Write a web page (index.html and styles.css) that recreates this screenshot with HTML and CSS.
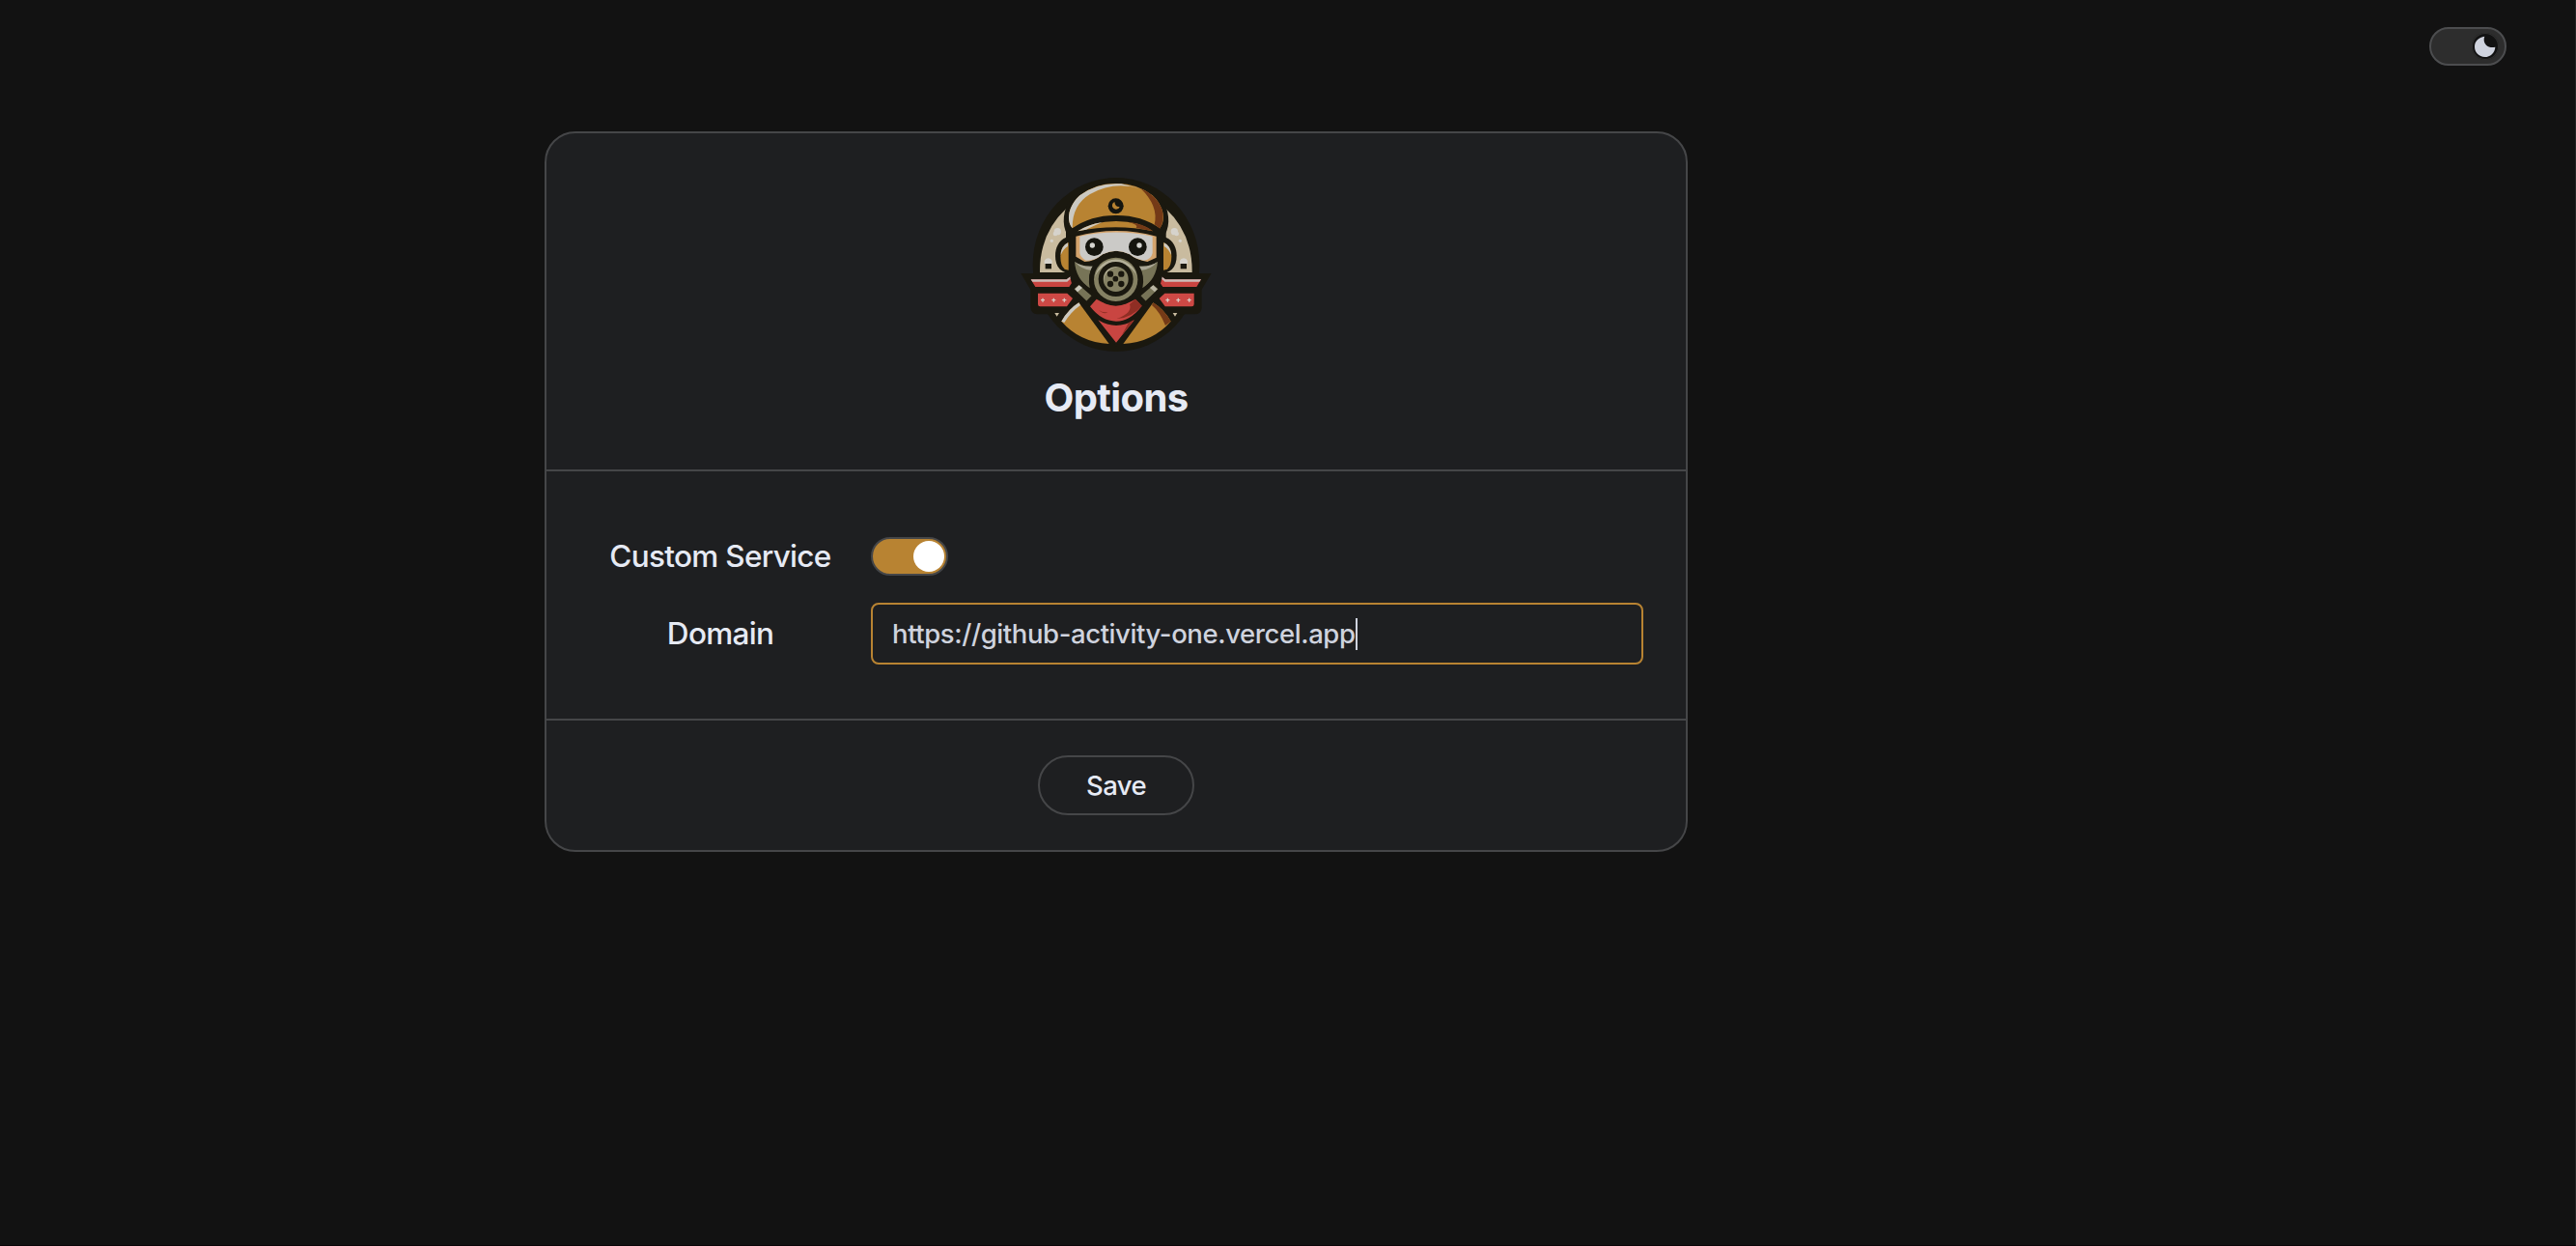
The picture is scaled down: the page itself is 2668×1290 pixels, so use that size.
FILE: index.html
```html
<!DOCTYPE html>
<html lang="en">
<head>
<meta charset="utf-8">
<title>Options</title>
<link rel="stylesheet" href="styles.css">
</head>
<body>
<div class="page">
  <nav class="topbar">
    <div class="theme-switch" role="switch" aria-checked="true">
      <span class="theme-knob">
        <svg class="moon" viewBox="0 0 84 84"><path d="M40 11C22 14 9 25 9 43C9 61 22 75 41 75C57 75 72 62 73 44C64 47 51 45 45 38C38 31 36 20 40 11Z" fill="#cfd3de"/></svg>
      </span>
    </div>
  </nav>
  <main class="card">
    <header class="card-header">
      <svg class="logo" viewBox="3 0 630 630">
        <ellipse cx="318" cy="312" rx="259" ry="270" fill="#1a180f"/>
        <path d="M22 339H614L584 389V447Q582 466 562 466H72Q54 464 52 446V390Z" fill="#1a180f"/>
        <g id="side-left">
          <path d="M81 336Q80 215 162 139V336Z" fill="#c9bb9f"/>
          <g fill="#d6d3cc"><circle cx="136" cy="209" r="11"/><circle cx="129" cy="216" r="7"/><circle cx="118" cy="238" r="5"/><path d="M95 309V300a13 13 0 0 1 24 0V309Z"/></g>
          <path d="M98 309H117V325H98Z" fill="#1a180f"/>
          <path d="M190 222C150 222 129 249 129 284C129 319 147 341 190 341Z" fill="#1a180f"/>
          <path d="M170 243Q145 253 145 286Q145 316 158 326L170 329Z" fill="#b88332"/>
          <path d="M168 244Q147 254 146 282Q154 263 168 255Z" fill="#cbc9c2"/>
          <path d="M53 358H164L182 344L190 354L172 381H67Z" fill="#c94541"/>
          <path d="M53 358H164L182 344L184 348L166 365H58Z" fill="#cbbcb8"/>
          <path d="M75 401H166L183 417L165 442H82Q75 442 75 435Z" fill="#ce4945"/>
          <path d="M90 416V428M84 422H96M124 416V428M118 422H130M157 416V428M151 422H163" stroke="#d8cbc4" stroke-width="4"/>
          <path d="M127 462H141L134 473Z" fill="#c9bb9f"/>
        </g>
        <use href="#side-left" transform="translate(635 0) scale(-1 1)"/>
        <path d="M148 488Q170 450 202 430L296 558Q205 553 148 488Z" fill="#b88332"/>
        <path d="M148 488Q170 450 202 430L207 438Q178 458 157 492Z" fill="#cbc9c2"/>
        <path d="M488 488Q466 450 433 430L340 558Q431 553 488 488Z" fill="#b88332"/>
        <path d="M488 488Q466 450 433 430L429 438Q454 458 471 501Z" fill="#743a17"/>
        <path d="M175 200H461V350Q450 410 400 442L318 566L236 442Q186 410 175 350Z" fill="#1a180f"/>
        <path d="M262 484Q318 518 375 484L318 554Z" fill="#c94541"/>
        <path d="M374 483L357 492L334 534Z" fill="#8f2e24"/>
        <path d="M257 419Q318 455 378 419L398 440Q361 488 318 488Q273 488 237 442Z" fill="#c94541"/>
        <path d="M378 419L398 440Q365 478 320 480Q370 462 360 435Z" fill="#8f2e24"/>
        <path d="M264 453Q276 462 292 459Q282 469 264 453Z" fill="#8f2e24"/>
        <path d="M193 224Q255 207 318 207Q385 207 443 224V290L415 303Q380 298 360 280Q318 259 276 280Q250 303 220 303L193 287Z" fill="#d4a46d"/>
        <path d="M205 224Q318 199 431 224V276Q427 296 405 299Q380 296 360 280Q318 259 276 280Q250 302 224 299Q207 290 205 276Z" fill="#cbcac7"/>
        <circle cx="250" cy="257" r="28" fill="#15150f"/><circle cx="244" cy="252" r="8" fill="#d5d5d1"/>
        <circle cx="385" cy="257" r="28" fill="#15150f"/><circle cx="390" cy="252" r="8" fill="#d5d5d1"/>
        <path d="M189 303Q213 320 247 317Q228 344 236 385Q193 357 189 303Z" fill="#777457"/>
        <path d="M189 303Q213 320 247 317L239 329Q212 328 189 303Z" fill="#aaa695"/>
        <path d="M447 303Q423 320 389 317Q408 344 400 385Q443 357 447 303Z" fill="#777457"/>
        <path d="M447 303Q423 320 389 317L397 329Q424 328 447 303Z" fill="#aaa695"/>
        <path d="M178 387L202 366L251 408L226 434Z" fill="#777457" stroke="#1a180f" stroke-width="13" stroke-linejoin="round"/>
        <path d="M190 388L203 376L213 384L198 397Z" fill="#cbc9be"/>
        <path d="M458 387L434 366L385 408L410 434Z" fill="#777457" stroke="#1a180f" stroke-width="13" stroke-linejoin="round"/>
        <path d="M446 388L433 376L423 384L438 397Z" fill="#b9b6a4"/>
        <circle cx="317" cy="357" r="83" fill="#1a180f"/>
        <circle cx="317" cy="358" r="68" fill="#858163"/>
        <path d="M252 352A66 66 0 0 1 382 348A68 60 0 0 0 252 352Z" fill="#b3af98"/>
        <circle cx="317" cy="357" r="54" fill="#1a180f"/>
        <circle cx="317" cy="357" r="39" fill="#858163"/>
        <path d="M280 365A38 38 0 0 1 325 320A42 42 0 0 0 280 365Z" fill="#c0bca8"/>
        <g fill="#1a180f"><circle cx="300" cy="341" r="9.500"/><circle cx="334" cy="341" r="9.500"/><circle cx="316" cy="356" r="8.500"/><circle cx="300" cy="372" r="9.500"/><circle cx="334" cy="372" r="9.500"/></g>
        <path d="M166 218C148 190 153 137 177 109Q235 43 318 43Q401 43 459 109C483 137 488 190 470 218L451 222Q318 188 185 222Z" fill="#1a180f"/>
        <path d="M182 199C161 173 171 128 205 97Q254 59 318 60Q383 59 431 97C465 128 475 173 454 199Q395 158 318 159Q241 158 182 199Z" fill="#b88332"/>
        <path d="M182 199C161 173 171 128 205 97Q258 56 334 61L394 76Q310 51 237 93Q181 126 182 199Z" fill="#cbc9c2"/>
        <path d="M394 75Q442 95 460 138Q470 174 454 200L437 187Q451 130 394 75Z" fill="#743a17"/>
        <path d="M199 208Q246 177 318 177Q390 177 432 208Q318 183 199 208Z" fill="#b88332"/>
        <path d="M199 208Q230 187 275 180Q240 195 225 203Z" fill="#d0cabe"/>
        <path d="M354 179Q405 184 432 208L380 198Q390 188 354 179Z" fill="#743a17"/>
        <circle cx="317" cy="130" r="24" fill="#15150f"/>
        <path d="M313 117A12 12 0 1 0 329 132Q315 134 313 117Z" fill="#b88332"/>
      </svg>
      <h1 class="title">Options</h1>
    </header>
    <section class="card-body">
      <span class="label label-service">Custom Service</span>
      <span class="switch" role="switch" aria-checked="true"><span class="knob"></span></span>
      <span class="label label-domain">Domain</span>
      <div class="field"><span class="url">https://github-activity-one.vercel.app</span><span class="caret"></span></div>
    </section>
    <footer class="card-footer">
      <button class="save" type="button">Save</button>
    </footer>
  </main>
</div>
</body>
</html>
```
FILE: styles.css
```css
* { box-sizing: border-box; }
body {
  margin: 0;
  background: #121212;
  color: #e6eaf4;
  font-family: Inter, "Liberation Sans", sans-serif;
}
.page {
  height: 1290px;
  border-right: 1px solid #252525;
  border-bottom: 1px solid #0a0508;
}
.topbar {
  display: flex;
  justify-content: flex-end;
  height: 136px;
  padding: 28px 71px 0 0;
}
.theme-switch {
  display: flex;
  justify-content: flex-end;
  width: 80px;
  height: 40px;
  padding: 4px 6px;
  border: 2px solid #4c4d4f;
  border-radius: 20px;
  background: #2d2d2d;
}
.theme-knob {
  width: 28px;
  height: 28px;
  border-radius: 50%;
  background: #121212;
  box-shadow: inset 0 0 0 1px #303030;
}
.moon { display: block; width: 28px; height: 28px; }
.card {
  width: 1184px;
  margin-left: 564px;
  border: 2px solid #454648;
  border-radius: 32px;
  background: #1e1f21;
}
.card-header {
  display: flex;
  flex-direction: column;
  align-items: center;
  height: 350px;
  padding-top: 32px;
  border-bottom: 2px solid #454648;
}
.logo { width: 210px; height: 210px; }
.title {
  margin: 0;
  font-size: 40px;
  font-weight: 700;
  line-height: 64px;
  letter-spacing: -0.6px;
}
.card-body {
  display: grid;
  grid-template-columns: 232px 800px;
  grid-auto-rows: 64px;
  column-gap: 40px;
  row-gap: 16px;
  align-items: center;
  padding: 56px 44px 56px 64px;
  border-bottom: 2px solid #454648;
}
.label {
  font-size: 31.5px;
  font-weight: 450;
  line-height: 40px;
  letter-spacing: -0.7px;
  text-align: center;
  white-space: nowrap;
}
.switch {
  display: flex;
  justify-content: flex-end;
  width: 80px;
  height: 40px;
  padding: 2px;
  border: 2px solid #454648;
  border-radius: 20px;
  background: #b88332;
}
.knob {
  width: 32px;
  height: 32px;
  border-radius: 50%;
  background: #fff;
}
.field {
  display: flex;
  align-items: center;
  height: 64px;
  padding-left: 20px;
  border: 2px solid #b88332;
  border-radius: 8px;
  color: #cfd3de;
  font-size: 27.5px;
  font-weight: 450;
  letter-spacing: -0.41px;
  white-space: nowrap;
}
.caret {
  width: 2px;
  height: 33px;
  background: #cfd3de;
}
.card-footer {
  display: flex;
  justify-content: center;
  padding: 36px 0;
}
.save {
  width: 162px;
  height: 62px;
  padding: 0;
  border: 2px solid #454648;
  border-radius: 31px;
  background: transparent;
  color: #e6eaf4;
  font-family: inherit;
  font-size: 27.5px;
  font-weight: 500;
  letter-spacing: -0.6px;
}
```
